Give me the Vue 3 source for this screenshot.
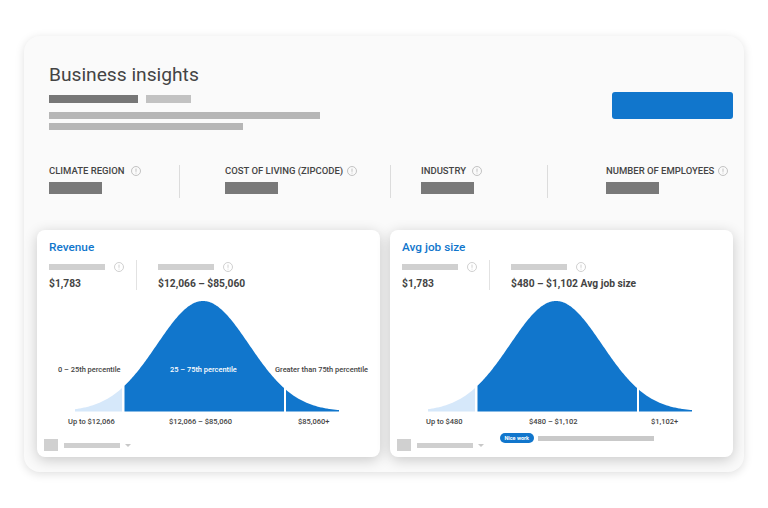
<script setup>
const BLUE = '#1176cc'
const LIGHT = '#d6e8fa'
const bell = (x) => 411.5 - 110.5 * Math.exp(-((x - 166) ** 2) / (2 * 46 * 46))
function area(x1, x2) {
  let d = `M${x1} 411.5`
  for (let x = x1; x <= x2; x += 1) d += ` L${x} ${bell(x).toFixed(2)}`
  d += ` L${x2} ${bell(x2).toFixed(2)} L${x2} 411.5 Z`
  return d
}
const segments = [
  { d: area(38, 85), fill: LIGHT },
  { d: area(87.5, 247), fill: BLUE },
  { d: area(249, 302), fill: BLUE }
]
const stats = [
  { cls: 's1', label: 'CLIMATE REGION' },
  { cls: 's2', label: 'COST OF LIVING (ZIPCODE)' },
  { cls: 's3', label: 'INDUSTRY' },
  { cls: 's4', label: 'NUMBER OF EMPLOYEES' }
]
const cards = [
  {
    title: 'Revenue', range: '$12,066 – $85,060',
    bands: ['0 – 25th percentile', '25 – 75th percentile', 'Greater than 75th percentile'],
    ticks: ['Up to $12,066', '$12,066 – $85,060', '$85,060+'], cls: 'rev', note: false
  },
  {
    title: 'Avg job size', range: '$480 – $1,102 Avg job size',
    bands: [],
    ticks: ['Up to $480', '$480 – $1,102', '$1,102+'], cls: 'job', note: true
  }
]
</script>

<template>
  <main class="stage">
    <section class="panel">
      <header class="head">
        <div class="intro">
          <h1 class="title">Business insights</h1>
          <div class="chips"><span class="chip dark"></span><span class="chip pale"></span></div>
          <div class="line long"></div>
          <div class="line short"></div>
        </div>
        <div class="cta"></div>
      </header>

      <div class="stats">
        <div v-for="s in stats" :key="s.label" class="stat" :class="s.cls">
          <div class="stat-label">
            <span>{{ s.label }}</span>
            <svg class="info" viewBox="0 0 10 10" width="10" height="10"><circle cx="5" cy="5" r="4.5" fill="none" stroke="#b4b4b4" stroke-width=".8"/><path d="M5 2.6V5.8M5 6.7V7.5" stroke="#b4b4b4" stroke-width=".8"/></svg>
          </div>
          <div class="stat-bar"></div>
        </div>
      </div>

      <div class="cards">
        <article v-for="c in cards" :key="c.title" class="card" :class="c.cls">
          <h2 class="card-title">{{ c.title }}</h2>
          <div class="metrics">
            <div class="metric first">
              <div class="metric-top">
                <span class="metric-bar"></span>
                <svg class="info" viewBox="0 0 10 10" width="10" height="10"><circle cx="5" cy="5" r="4.5" fill="none" stroke="#c4c4c4" stroke-width=".8"/><path d="M5 2.6V5.8M5 6.7V7.5" stroke="#c4c4c4" stroke-width=".8"/></svg>
              </div>
              <div class="metric-val">$1,783</div>
            </div>
            <div class="metric second">
              <div class="metric-top">
                <span class="metric-bar"></span>
                <svg class="info" viewBox="0 0 10 10" width="10" height="10"><circle cx="5" cy="5" r="4.5" fill="none" stroke="#c4c4c4" stroke-width=".8"/><path d="M5 2.6V5.8M5 6.7V7.5" stroke="#c4c4c4" stroke-width=".8"/></svg>
              </div>
              <div class="metric-val">{{ c.range }}</div>
            </div>
          </div>

          <div class="chart">
            <svg class="curve" width="343" height="113" viewBox="0 300 343 113">
              <path v-for="(s, i) in segments" :key="i" :d="s.d" :fill="s.fill" />
            </svg>
            <template v-if="c.bands.length">
              <span class="band b1">{{ c.bands[0] }}</span>
              <span class="band b2">{{ c.bands[1] }}</span>
              <span class="band b3">{{ c.bands[2] }}</span>
            </template>
          </div>

          <div class="ticks">
            <span class="tick t1">{{ c.ticks[0] }}</span>
            <span class="tick t2">{{ c.ticks[1] }}</span>
            <span class="tick t3">{{ c.ticks[2] }}</span>
          </div>

          <footer class="foot">
            <div class="picker">
              <span class="square"></span>
              <span class="pick-bar"></span>
              <span class="caret"></span>
            </div>
            <div v-if="c.note" class="note">
              <span class="pill">Nice work</span>
              <span class="note-bar"></span>
            </div>
          </footer>
        </article>
      </div>
    </section>
  </main>
</template>

<style scoped>
.stage {
  width: 768px;
  height: 508px;
  padding: 36px 24px 36px;
  box-sizing: border-box;
  background: #fff;
  font-family: Roboto, "Liberation Sans", sans-serif;
}
.panel {
  width: 720px;
  height: 436px;
  box-sizing: border-box;
  background: #fafafa;
  border-radius: 16px;
  box-shadow: 0 2px 10px rgba(0, 0, 0, 0.13);
  padding: 0 11px 0 13px;
}
.head {
  display: flex;
  justify-content: space-between;
  align-items: flex-end;
  height: 94px;
  padding: 0 0 0 12px;
}
.title {
  margin: 0;
  padding-top: 28px;
  font-size: 19.2px;
  line-height: 22px;
  font-weight: 400;
  color: #444;
}
.chips { display: flex; gap: 8px; margin-top: 9px; }
.chip { height: 8px; display: block; }
.dark { width: 89px; background: #777; }
.pale { width: 45px; background: #c2c2c2; }
.line { height: 7px; background: #b6b6b6; margin-top: 4px; }
.chips + .line { margin-top: 9px; }
.long { width: 271px; }
.short { width: 194px; }
.cta {
  width: 121px;
  height: 27px;
  background: #1176cc;
  border-radius: 3px;
  margin-bottom: 11px;
}
.stats {
  display: flex;
  margin-top: 35px;
  height: 33px;
}
.stat {
  flex: none;
  box-sizing: border-box;
  height: 33px;
  border-right: 1px solid #dcdcdc;
}
.s1 { width: 143px; padding-left: 12px; }
.s2 { width: 211px; padding-left: 45px; }
.s3 { width: 157px; padding-left: 30px; }
.s4 { width: 209px; padding-left: 58px; border-right: 0; }
.stat-label {
  display: flex;
  align-items: center;
  gap: 4px;
  height: 12px;
  font-size: 9.5px;
  line-height: 12px;
  font-weight: 500;
  color: #444;
  white-space: nowrap;
}
.s1 .stat-label { gap: 6.5px; }
.s3 .stat-label { gap: 6px; }
.stat-bar { width: 53px; height: 12px; background: #797979; margin-top: 5px; }
.cards {
  display: flex;
  gap: 10px;
  margin-top: 32px;
}
.card {
  position: relative;
  width: 343px;
  height: 227px;
  box-sizing: border-box;
  background: #fff;
  border-radius: 8px;
  box-shadow: 0 3px 14px rgba(0, 0, 0, 0.2);
  padding: 10px 12px 0;
}
.card-title {
  margin: 0;
  font-size: 11.8px;
  line-height: 14px;
  font-weight: 500;
  color: #1176cc;
}
.metrics { display: flex; margin-top: 6px; height: 30px; }
.metric { box-sizing: border-box; }
.first { width: 88px; border-right: 1px solid #e2e2e2; }
.second { padding-left: 21px; }
.metric-top { display: flex; align-items: center; gap: 9px; height: 14px; }
.metric-bar { width: 56px; height: 6px; background: #d0d0d0; display: block; }
.metric-val {
  margin-top: 3px;
  font-size: 10.25px;
  line-height: 14px;
  font-weight: 700;
  color: #444;
  white-space: nowrap;
}
.chart {
  position: relative;
  height: 112px;
  margin: 10px -12px 0;
}
.curve { position: absolute; left: 0; top: 0; display: block; }
.band {
  position: absolute;
  top: 64px;
  font-size: 7.45px;
  line-height: 12px;
  font-weight: 500;
  color: #444;
  white-space: nowrap;
}
.b1 { left: 21px; }
.b2 { left: 133px; color: #fff; }
.b3 { left: 238px; }
.ticks { position: relative; height: 12px; margin-top: 4px; }
.tick {
  position: absolute;
  top: 0;
  font-size: 7.5px;
  line-height: 12px;
  font-weight: 500;
  color: #444;
  white-space: nowrap;
}
.rev .t1 { left: 19px; }
.rev .t2 { left: 120px; }
.rev .t3 { left: 249px; }
.job .t1 { left: 24px; }
.job .t2 { left: 127px; }
.job .t3 { left: 249px; }
.foot { position: relative; height: 20px; margin-top: 5px; }
.picker {
  position: absolute;
  left: -5.5px;
  top: 6px;
  display: flex;
  align-items: center;
  gap: 5.5px;
}
.square { width: 14.5px; height: 12px; background: #d0d0d0; display: block; }
.pick-bar { width: 56px; height: 5px; background: #cfcfcf; display: block; }
.caret {
  width: 0;
  height: 0;
  border-left: 3px solid transparent;
  border-right: 3px solid transparent;
  border-top: 3px solid #c8c8c8;
  margin-left: -0.5px;
  margin-top: 1px;
}
.note {
  position: absolute;
  left: 97.5px;
  top: 0;
  display: flex;
  align-items: center;
  gap: 4px;
}
.pill {
  width: 34.5px;
  height: 10px;
  border-radius: 5px;
  background: #1176cc;
  color: #fff;
  font-size: 5.5px;
  line-height: 10px;
  font-weight: 700;
  text-align: center;
  white-space: nowrap;
}
.note-bar { width: 116px; height: 5px; background: #c9c9c9; display: block; }
</style>
